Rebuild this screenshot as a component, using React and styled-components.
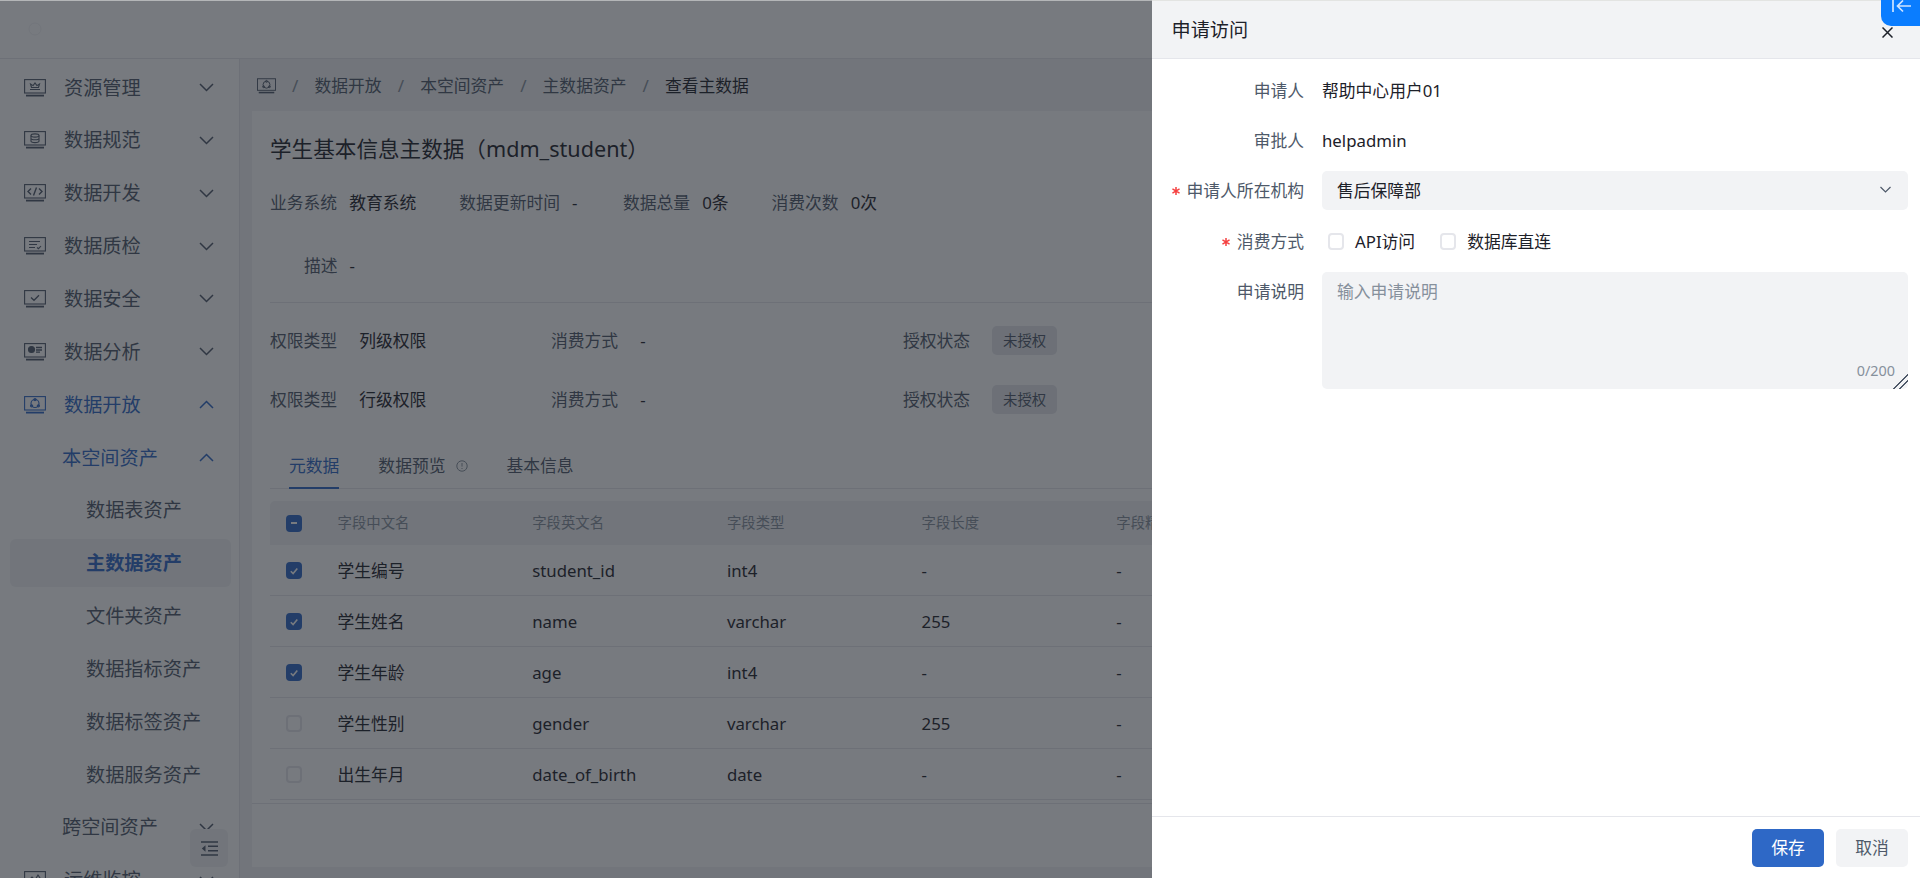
import React from 'react';
import styled, { createGlobalStyle } from 'styled-components';

const PRIMARY = '#2e68c6';

const GlobalStyle = createGlobalStyle`
    html, body {
        margin: 0;
        padding: 0;
        height: 100%;
        overflow: hidden;
    }
    body {
        font-family: "Noto Sans", "Noto Sans CJK SC", sans-serif;
        font-size: 16.8px;
        color: #1d2129;
        background: #fff;
    }
    * {
        box-sizing: border-box;
    }
`;

const Page = styled.div`
    height: 100vh;
    display: flex;
    flex-direction: column;
    overflow: hidden;
`;

const TopBar = styled.header`
    height: 59px;
    flex: none;
    background: #fff;
    border-bottom: 1px solid #e5e6eb;
    display: flex;
    align-items: center;
    padding-left: 27px;
`;

const Body = styled.div`
    flex: 1;
    min-height: 0;
    display: flex;
`;

/* left menu */
const Sidebar = styled.nav`
    width: 240px;
    flex: none;
    padding: 4.6px 8px 0 10px;
    background: #fff;
    border-right: 1px solid #e5e6eb;
    overflow: hidden;
`;

const MenuItem = styled.div`
    height: 48px;
    margin-bottom: 4.85px;
    display: flex;
    align-items: center;
    padding-left: ${(p) => p.$indent}px;
    padding-right: 17px;
    gap: 18px;
    font-size: 19.2px;
    line-height: 26px;
    border-radius: 6px;
    white-space: nowrap;
    color: ${(p) => (p.$active ? PRIMARY : '#4e5969')};
    background: ${(p) => (p.$selected ? '#f2f3f5' : 'transparent')};
    font-weight: ${(p) => (p.$selected ? 700 : 400)};
`;

const Arrow = styled.svg`
    margin-left: auto;
    width: 15px;
    height: 9px;
    flex: none;
    fill: none;
    stroke: currentColor;
    stroke-width: 1.5;
`;

const MenuIconSvg = styled.svg`
    width: ${(p) => (p.$small ? 19 : 22)}px;
    height: ${(p) => (p.$small ? 16 : 18)}px;
    flex: none;
    fill: none;
    stroke: currentColor;
    stroke-width: 1.1;
`;

const CollapseButton = styled.div`
    position: absolute;
    left: 190px;
    top: 829px;
    width: 38px;
    height: 38px;
    border-radius: 6px;
    background: #f2f3f5;
    display: flex;
    align-items: center;
    justify-content: center;
    color: #4e5969;
`;

/* main column */
const Main = styled.main`
    flex: 1;
    min-width: 0;
    display: flex;
    flex-direction: column;
    background: #f2f3f5;
`;

const Breadcrumb = styled.div`
    height: 52px;
    flex: none;
    display: flex;
    align-items: center;
    padding: 1px 0 0 17px;
    color: #4e5969;
    line-height: 24px;
    white-space: nowrap;
`;

const Crumb = styled.span`
    color: ${(p) => (p.$current ? '#1d2129' : '#4e5969')};
`;

const CrumbSep = styled.span`
    width: 38.5px;
    text-align: center;
    color: #86909c;
    font-size: 17px;
`;

const Card = styled.section`
    flex: 1;
    min-height: 0;
    margin: 0 0 11px 12px;
    padding: 23px 0 0 18px;
    background: #fff;
    overflow: hidden;
`;

const Title = styled.h1`
    margin: 0;
    font-size: 21.6px;
    line-height: 30px;
    font-weight: 400;
    color: #1d2129;
    white-space: nowrap;
`;

const MetaRow = styled.div`
    margin-top: 27px;
    display: flex;
    gap: 43px;
    line-height: 24px;
    white-space: nowrap;
`;

const MetaItem = styled.div`
    display: flex;
    gap: 12px;
`;

const Label = styled.span`
    color: #4e5969;
`;

const Dash = styled.span`
    min-width: 8px;
`;

const DescRow = styled.div`
    margin-top: 39px;
    display: flex;
    gap: 12px;
    line-height: 24px;
    padding-left: 34px;
`;

const Divider = styled.div`
    margin-top: 24px;
    height: 1px;
    background: #e5e6eb;
`;

const PermissionRow = styled.div`
    margin-top: ${(p) => p.$top}px;
    height: 29px;
    display: grid;
    grid-template-columns: 281px 352px auto;
    align-items: center;
    line-height: 24px;
    white-space: nowrap;
`;

const PermissionCell = styled.div`
    display: flex;
    align-items: center;
    gap: 22px;
`;

const Tag = styled.span`
    width: 65px;
    height: 29px;
    border-radius: 5px;
    background: #e5e6eb;
    color: #4e5969;
    font-size: 14.4px;
    line-height: 29px;
    text-align: center;
`;

const TabBar = styled.div`
    margin-top: 28px;
    height: 47px;
    display: flex;
    gap: 39px;
    padding-left: 19px;
    border-bottom: 1px solid #e5e6eb;
`;

const Tab = styled.div`
    height: 47px;
    display: flex;
    align-items: center;
    gap: 10px;
    padding-top: 3px;
    line-height: 24px;
    color: ${(p) => (p.$active ? PRIMARY : '#4e5969')};
    border-bottom: 2px solid ${(p) => (p.$active ? PRIMARY : 'transparent')};
`;

const Table = styled.div`
    margin-top: 12px;
    white-space: nowrap;
`;

const TableRow = styled.div`
    display: grid;
    grid-template-columns: 67.5px repeat(5, 194.7px);
    align-items: center;
    height: ${(p) => (p.$head ? 44 : 51)}px;
    padding-top: ${(p) => (p.$head ? 0 : 1)}px;
    background: ${(p) => (p.$head ? '#f2f3f5' : 'transparent')};
    border-bottom: ${(p) => (p.$head ? 'none' : '1px solid #e5e6eb')};
    border-radius: ${(p) => (p.$head ? '5px 0 0 0' : '0')};
    font-size: ${(p) => (p.$head ? '14.4px' : '16.8px')};
    color: ${(p) => (p.$head ? '#86909c' : '#1d2129')};
    line-height: 24px;
`;

const CheckCell = styled.div`
    padding-left: 16px;
    display: flex;
`;

const CheckBox = styled.span`
    width: 16px;
    height: 17px;
    flex: none;
    border-radius: 4px;
    display: flex;
    align-items: center;
    justify-content: center;
    background: ${(p) => (p.$filled ? PRIMARY : '#fff')};
    border: ${(p) => (p.$filled ? 'none' : '2px solid #e5e6eb')};
`;

const TableEnd = styled.div`
    margin: 3px 0 0 -18px;
    height: 1px;
    background: #e5e6eb;
`;

/* mask + drawer */
const Mask = styled.div`
    position: fixed;
    inset: 0;
    background: rgba(29, 33, 41, 0.6);
    border-top: 1px solid #b4b6b8;
`;

const Drawer = styled.aside`
    position: fixed;
    top: 0;
    right: 0;
    bottom: 0;
    width: 768px;
    display: flex;
    flex-direction: column;
    background: #fff;
    border-top: 1px solid #e3e4e2;
`;

const DrawerHeader = styled.div`
    height: 58px;
    flex: none;
    display: flex;
    align-items: center;
    padding-left: 19.5px;
    background: #f2f3f5;
    border-bottom: 1px solid #e5e6eb;
    font-size: 19.2px;
    line-height: 28px;
`;

const CloseIcon = styled.svg`
    position: absolute;
    left: 730px;
    top: 26px;
    width: 11px;
    height: 11px;
    stroke: #1d2129;
    stroke-width: 1.5;
`;

const HelpTab = styled.div`
    position: absolute;
    top: -1px;
    right: 0;
    width: 39px;
    height: 26px;
    background: #0a7dff;
    border-radius: 0 0 0 10px;
    color: #cfe4ff;
`;

const HelpIcon = styled.svg`
    position: absolute;
    left: 11px;
    top: -1px;
    width: 20px;
    height: 14px;
    fill: none;
    stroke: currentColor;
    stroke-width: 1.7;
`;

const DrawerBody = styled.div`
    flex: 1;
    min-height: 0;
    padding: 12px 12px 0 0;
    display: flex;
    flex-direction: column;
    gap: 11px;
`;

const FormRow = styled.div`
    display: grid;
    grid-template-columns: 152px 1fr;
    column-gap: 18px;
    align-items: start;
    line-height: 39px;
    margin-top: ${(p) => p.$nudge || 0}px;
`;

const FormLabel = styled.div`
    display: flex;
    align-items: center;
    justify-content: flex-end;
    gap: 7px;
    height: 39px;
    color: #4e5969;
    white-space: nowrap;
`;

const Star = styled.svg`
    width: 8px;
    height: 8px;
    stroke: #f53f3f;
    stroke-width: 1.3;
    flex: none;
`;

const Select = styled.div`
    height: 39px;
    display: flex;
    align-items: center;
    justify-content: space-between;
    padding: 0 17px 0 15px;
    background: #f2f3f5;
    border-radius: 5px;
    color: #1d2129;
`;

const SelectArrow = styled.svg`
    width: 11px;
    height: 7px;
    margin-top: -2px;
    fill: none;
    stroke: #4e5969;
    stroke-width: 1.2;
`;

const CheckGroup = styled.div`
    height: 39px;
    display: flex;
    align-items: center;
    padding-left: 6px;
    gap: 25px;
`;

const CheckOption = styled.label`
    display: flex;
    align-items: center;
    gap: 11px;
    color: #1d2129;
`;

const TextAreaWrap = styled.div`
    position: relative;
    height: 117px;
`;

const TextArea = styled.textarea`
    display: block;
    width: 100%;
    height: 100%;
    padding: 8px 15px;
    border: 0;
    outline: 0;
    border-radius: 5px;
    background: #f2f3f5;
    resize: vertical;
    font: inherit;
    line-height: 24px;
    color: #1d2129;

    &::placeholder {
        color: #86909c;
        opacity: 1;
    }

    &::-webkit-resizer {
        background: linear-gradient(
            135deg,
            transparent 47%,
            #4e5969 47% 54%,
            transparent 54% 67%,
            #4e5969 67% 74%,
            transparent 74%
        );
    }
`;

const Counter = styled.span`
    position: absolute;
    right: 13px;
    bottom: 9px;
    font-size: 14.4px;
    line-height: 18px;
    color: #86909c;
`;

const DrawerFooter = styled.div`
    height: 62px;
    flex: none;
    display: flex;
    align-items: flex-start;
    justify-content: flex-end;
    gap: 12px;
    padding: 12px 12px 0 0;
    border-top: 1px solid #e5e6eb;
`;

const Button = styled.button`
    width: 72px;
    height: 38px;
    border: 0;
    border-radius: 5px;
    font: inherit;
    line-height: 24px;
    background: ${(p) => (p.$primary ? PRIMARY : '#f2f3f5')};
    color: ${(p) => (p.$primary ? '#fff' : '#4e5969')};
`;

const glyphs = {
    resource: <path d="M6 10.5h10M7.5 8.5 6.5 5l2.6 1.6L11 4l1.9 2.6L15.5 5l-1 3.5z" />,
    spec: (
        <>
            <ellipse cx="11" cy="4.5" rx="4" ry="1.6" />
            <path d="M7 4.5v5.5c0 .9 1.8 1.6 4 1.6s4-.7 4-1.6V4.5M7 7.2c0 .9 1.8 1.6 4 1.6s4-.7 4-1.6" />
        </>
    ),
    dev: <path d="m7 4.5-3 3 3 3M15 4.5l3 3-3 3M12.5 3.5l-3 8" strokeWidth="1.4" />,
    quality: <path d="M5 4.5h11M5 7.5h8M5 10.5h6M13 10.5l1.5 1.2 2.5-2.7" />,
    safe: <path d="m7 7.5 3 2.8 5-5" strokeWidth="1.3" />,
    analysis: (
        <>
            <circle cx="7.5" cy="6.5" r="3" fill="currentColor" />
            <path d="M12 4.5h6M12 7h6M12 9.2h4" strokeWidth="1.3" />
        </>
    ),
    open: (
        <>
            <circle cx="11" cy="7.5" r="4" />
            <circle cx="11" cy="3.6" r="1.1" />
            <circle cx="7.6" cy="9.8" r="1.1" />
            <circle cx="14.4" cy="9.8" r="1.1" />
        </>
    ),
    monitor: <path d="m4 10 4-4 3 3 3-5 4 6" />,
};

const MenuIcon = ({ name, small }) => (
    <MenuIconSvg viewBox="0 0 22 18" $small={small}>
        <rect x="0.6" y="0.6" width="20.8" height="13.4" />
        <path d="M2 16.6h18" strokeWidth="1.8" />
        {glyphs[name]}
    </MenuIconSvg>
);

const Chevron = ({ up }) => (
    <Arrow viewBox="0 0 15 9">
        <polyline points={up ? '1,8 7.5,1.5 14,8' : '1,1 7.5,7.5 14,1'} />
    </Arrow>
);

const Check = ({ state }) => {
    if (state === 'none') return <CheckBox />;
    return (
        <CheckBox $filled>
            <svg width="10" height="10" viewBox="0 0 10 10" fill="none" stroke="#fff" strokeWidth="1.6">
                {state === 'some' ? <path d="M2 5h6" strokeWidth="2" /> : <path d="m1.8 5.2 2.3 2.3 4.2-5" />}
            </svg>
        </CheckBox>
    );
};

const mainMenu = [
    ['resource', '资源管理'],
    ['spec', '数据规范'],
    ['dev', '数据开发'],
    ['quality', '数据质检'],
    ['safe', '数据安全'],
    ['analysis', '数据分析'],
];

const assetMenu = ['数据表资产', '主数据资产', '文件夹资产', '数据指标资产', '数据标签资产', '数据服务资产'];

const columns = ['字段中文名', '字段英文名', '字段类型', '字段长度', '字段精度'];

const rows = [
    { check: 'on', cn: '学生编号', en: 'student_id', type: 'int4', len: '-' },
    { check: 'on', cn: '学生姓名', en: 'name', type: 'varchar', len: '255' },
    { check: 'on', cn: '学生年龄', en: 'age', type: 'int4', len: '-' },
    { check: 'none', cn: '学生性别', en: 'gender', type: 'varchar', len: '255' },
    { check: 'none', cn: '出生年月', en: 'date_of_birth', type: 'date', len: '-' },
];

const permissions = [
    { top: 23, scope: '列级权限' },
    { top: 30, scope: '行级权限' },
];

const RequiredStar = () => (
    <Star viewBox="0 0 7 7">
        <path d="M3.5 0v7M.4 1.7l6.2 3.6M6.6 1.7.4 5.3" />
    </Star>
);

const App = () => {
    return (
        <>
            <GlobalStyle />
            <Page>
                <TopBar>
                    <svg width="16" height="16" viewBox="0 0 16 16" fill="none" stroke="#f2f3f5">
                        <circle cx="8" cy="8" r="6" />
                    </svg>
                </TopBar>
                <Body>
                    <Sidebar>
                        {mainMenu.map(([icon, text]) => (
                            <MenuItem key={text} $indent={14}>
                                <MenuIcon name={icon} />
                                {text}
                                <Chevron />
                            </MenuItem>
                        ))}
                        <MenuItem $indent={14} $active>
                            <MenuIcon name="open" />
                            数据开放
                            <Chevron up />
                        </MenuItem>
                        <MenuItem $indent={52} $active>
                            本空间资产
                            <Chevron up />
                        </MenuItem>
                        {assetMenu.map((text) => (
                            <MenuItem key={text} $indent={76} $active={text === '主数据资产'} $selected={text === '主数据资产'}>
                                {text}
                            </MenuItem>
                        ))}
                        <MenuItem $indent={52}>
                            跨空间资产
                            <Chevron />
                        </MenuItem>
                        <MenuItem $indent={14}>
                            <MenuIcon name="monitor" />
                            运维监控
                            <Chevron />
                        </MenuItem>
                    </Sidebar>
                    <Main>
                        <Breadcrumb>
                            <MenuIcon name="open" small />
                            <CrumbSep>/</CrumbSep>
                            <Crumb>数据开放</Crumb>
                            <CrumbSep>/</CrumbSep>
                            <Crumb>本空间资产</Crumb>
                            <CrumbSep>/</CrumbSep>
                            <Crumb>主数据资产</Crumb>
                            <CrumbSep>/</CrumbSep>
                            <Crumb $current>查看主数据</Crumb>
                        </Breadcrumb>
                        <Card>
                            <Title>学生基本信息主数据（mdm_student）</Title>
                            <MetaRow>
                                <MetaItem>
                                    <Label>业务系统</Label>
                                    <span>教育系统</span>
                                </MetaItem>
                                <MetaItem>
                                    <Label>数据更新时间</Label>
                                    <Dash>-</Dash>
                                </MetaItem>
                                <MetaItem>
                                    <Label>数据总量</Label>
                                    <span>0条</span>
                                </MetaItem>
                                <MetaItem>
                                    <Label>消费次数</Label>
                                    <span>0次</span>
                                </MetaItem>
                            </MetaRow>
                            <DescRow>
                                <Label>描述</Label>
                                <span>-</span>
                            </DescRow>
                            <Divider />
                            {permissions.map((item) => (
                                <PermissionRow key={item.scope} $top={item.top}>
                                    <PermissionCell>
                                        <Label>权限类型</Label>
                                        <span>{item.scope}</span>
                                    </PermissionCell>
                                    <PermissionCell>
                                        <Label>消费方式</Label>
                                        <span>-</span>
                                    </PermissionCell>
                                    <PermissionCell>
                                        <Label>授权状态</Label>
                                        <Tag>未授权</Tag>
                                    </PermissionCell>
                                </PermissionRow>
                            ))}
                            <TabBar>
                                <Tab $active>元数据</Tab>
                                <Tab>
                                    数据预览
                                    <svg width="12" height="12" viewBox="0 0 12 12" fill="none" stroke="#86909c">
                                        <circle cx="6" cy="6" r="5.2" />
                                        <path d="M6 3v3.6M6 8v1" />
                                    </svg>
                                </Tab>
                                <Tab>基本信息</Tab>
                            </TabBar>
                            <Table>
                                <TableRow $head>
                                    <CheckCell>
                                        <Check state="some" />
                                    </CheckCell>
                                    {columns.map((col) => (
                                        <div key={col}>{col}</div>
                                    ))}
                                </TableRow>
                                {rows.map((row) => (
                                    <TableRow key={row.en}>
                                        <CheckCell>
                                            <Check state={row.check} />
                                        </CheckCell>
                                        <div>{row.cn}</div>
                                        <div>{row.en}</div>
                                        <div>{row.type}</div>
                                        <div>{row.len}</div>
                                        <div>-</div>
                                    </TableRow>
                                ))}
                            </Table>
                            <TableEnd />
                        </Card>
                    </Main>
                </Body>
                <CollapseButton>
                    <svg width="17" height="15" viewBox="0 0 17 15" fill="none" stroke="currentColor" strokeWidth="1.6">
                        <path d="M0 1h17M7 5.3h10M7 9.7h10M0 14h17" />
                        <path d="M4.5 4.2v6.6L0.8 7.5z" fill="currentColor" stroke="none" />
                    </svg>
                </CollapseButton>
            </Page>
            <Mask />
            <Drawer>
                <DrawerHeader>申请访问</DrawerHeader>
                <CloseIcon viewBox="0 0 11 11">
                    <path d="m.5.5 10 10M10.5.5l-10 10" />
                </CloseIcon>
                <HelpTab>
                    <HelpIcon viewBox="0 0 20 14">
                        <path d="M1 0v13M19 7H6M11 1.5 5.5 7l5.5 5.5" />
                    </HelpIcon>
                </HelpTab>
                <DrawerBody>
                    <FormRow>
                        <FormLabel>申请人</FormLabel>
                        <div>帮助中心用户01</div>
                    </FormRow>
                    <FormRow>
                        <FormLabel>审批人</FormLabel>
                        <div>helpadmin</div>
                    </FormRow>
                    <FormRow>
                        <FormLabel>
                            <RequiredStar />
                            申请人所在机构
                        </FormLabel>
                        <Select>
                            售后保障部
                            <SelectArrow viewBox="0 0 11 7">
                                <polyline points="0.5,1 5.5,6 10.5,1" />
                            </SelectArrow>
                        </Select>
                    </FormRow>
                    <FormRow $nudge={1}>
                        <FormLabel>
                            <RequiredStar />
                            消费方式
                        </FormLabel>
                        <CheckGroup>
                            <CheckOption>
                                <CheckBox />
                                API访问
                            </CheckOption>
                            <CheckOption>
                                <CheckBox />
                                数据库直连
                            </CheckOption>
                        </CheckGroup>
                    </FormRow>
                    <FormRow>
                        <FormLabel>申请说明</FormLabel>
                        <TextAreaWrap>
                            <TextArea placeholder="输入申请说明" />
                            <Counter>0/200</Counter>
                        </TextAreaWrap>
                    </FormRow>
                </DrawerBody>
                <DrawerFooter>
                    <Button $primary>保存</Button>
                    <Button>取消</Button>
                </DrawerFooter>
            </Drawer>
        </>
    );
};

export default App;
